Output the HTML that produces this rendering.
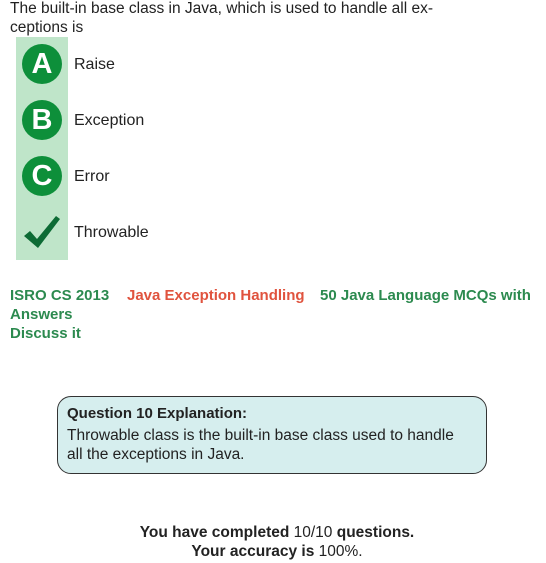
<!DOCTYPE html>
<html><head><meta charset="utf-8"><style>
body{margin:0;width:546px;height:563px;background:#fff;font-family:"Liberation Sans",sans-serif;color:#222;position:relative;overflow:hidden}
.a{position:absolute}
.q{left:10px;top:-1px;font-size:15.5px;line-height:19px;width:480px}
.strip{left:16px;top:37px;width:52px;height:223px;background:#bfe5c9}
.c{width:40px;height:40px;border-radius:50%;background:#0d8f3a;color:#fff;font-size:29px;font-weight:bold;line-height:41px;text-align:center;left:22px}
.l{left:74px;font-size:16px}
.t{font-weight:bold;font-size:15px;line-height:19px}
.g{color:#2c8a4f}.r{color:#e0533e}
.box{left:57px;top:396px;width:430px;height:78px;border:1.5px solid #333;border-radius:14px;background:#d6eeee;padding:0 0 0 9px;box-sizing:border-box}
</style></head><body>
<div class="a q">The built-in base class in Java, which is used to handle all ex-<br>ceptions is</div>
<div class="a strip"></div>
<div class="a c" style="top:44px">A</div>
<div class="a c" style="top:100px">B</div>
<div class="a c" style="top:156px">C</div>
<svg class="a" style="left:22px;top:214px" width="40" height="36" viewBox="0 0 40 36"><path d="M2 22 L8 17 L15 25 L34 2 L38 5 L16 34 Z" fill="#0d6b35"/></svg>
<div class="a l" style="top:56px">Raise</div>
<div class="a l" style="top:112px">Exception</div>
<div class="a l" style="top:168px">Error</div>
<div class="a l" style="top:224px">Throwable</div>
<div class="a t g" style="left:10px;top:286px">ISRO CS 2013</div>
<div class="a t r" style="left:127px;top:286px">Java Exception Handling</div>
<div class="a t g" style="left:320px;top:286px">50 Java Language MCQs with</div>
<div class="a t g" style="left:10px;top:305px">Answers</div>
<div class="a t g" style="left:10px;top:324px">Discuss it</div>
<div class="a box"><div style="font-weight:bold;font-size:15px;margin-top:8px">Question 10 Explanation:</div><div style="font-size:15.5px;line-height:19px;margin-top:4px">Throwable class is the built-in base class used to handle<br>all the exceptions in Java.</div></div>
<div class="a" style="left:0;width:554px;top:523px;text-align:center;font-size:15.5px;line-height:19px"><b>You have completed</b> 10/10 <b>questions.</b><br><b>Your accuracy is</b> 100%.</div>
</body></html>
